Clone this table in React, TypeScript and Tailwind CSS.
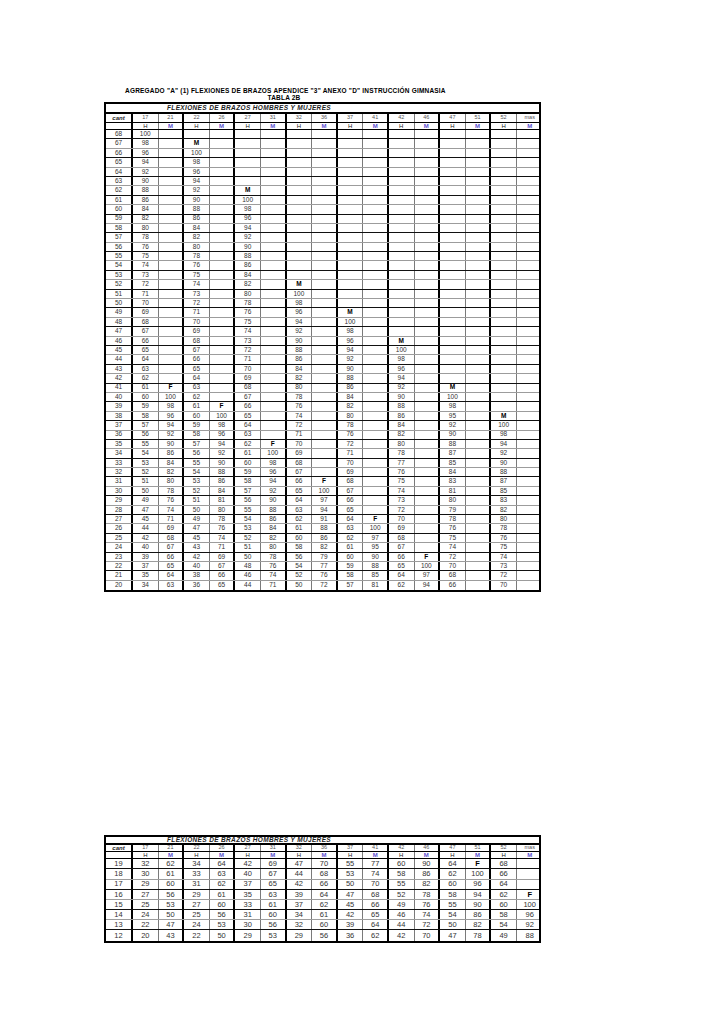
import React from "react";

type Col = { start: number; vals: string[] };

// column order: cant, 17H, 21M, 22H, 26M, 27H, 31M, 32H, 36M, 37H, 41M, 42H, 46M, 47H, 51M, 52H, mas M
const heads = ["cant", "17", "21", "22", "26", "27", "31", "32", "36", "37", "41", "42", "46", "47", "51", "52", "mas"];

const cols: Col[] = [
  { start: 68, vals: ["100", "98", "96", "94", "92", "90", "88", "86", "84", "82", "80", "78", "76", "75", "74", "73", "72", "71", "70", "69", "68", "67", "66", "65", "64", "63", "62", "61", "60", "59", "58", "57", "56", "55", "54", "53", "52", "51", "50", "49", "47", "45", "44", "42", "40", "39", "37", "35", "34"] },
  { start: 41, vals: ["F", "100", "98", "96", "94", "92", "90", "86", "84", "82", "80", "78", "76", "74", "71", "69", "68", "67", "66", "65", "64", "63"] },
  { start: 67, vals: ["M", "100", "98", "96", "94", "92", "90", "88", "86", "84", "82", "80", "78", "76", "75", "74", "73", "72", "71", "70", "69", "68", "67", "66", "65", "64", "63", "62", "61", "60", "59", "58", "57", "56", "55", "54", "53", "52", "51", "50", "49", "47", "45", "43", "42", "40", "38", "36"] },
  { start: 39, vals: ["F", "100", "98", "96", "94", "92", "90", "88", "86", "84", "81", "80", "78", "76", "74", "71", "69", "67", "66", "65"] },
  { start: 62, vals: ["M", "100", "98", "96", "94", "92", "90", "88", "86", "84", "82", "80", "78", "76", "75", "74", "73", "72", "71", "70", "69", "68", "67", "66", "65", "64", "63", "62", "61", "60", "59", "58", "57", "56", "55", "54", "53", "52", "51", "50", "48", "46", "44"] },
  { start: 35, vals: ["F", "100", "98", "96", "94", "92", "90", "88", "86", "84", "82", "80", "78", "76", "74", "71"] },
  { start: 52, vals: ["M", "100", "98", "96", "94", "92", "90", "88", "86", "84", "82", "80", "78", "76", "74", "72", "71", "70", "69", "68", "67", "66", "65", "64", "63", "62", "61", "60", "58", "56", "54", "52", "50"] },
  { start: 31, vals: ["F", "100", "97", "94", "91", "88", "86", "82", "79", "77", "76", "72"] },
  { start: 49, vals: ["M", "100", "98", "96", "94", "92", "90", "88", "86", "84", "82", "80", "78", "76", "72", "71", "70", "69", "68", "67", "66", "65", "64", "63", "62", "61", "60", "59", "58", "57"] },
  { start: 27, vals: ["F", "100", "97", "95", "90", "88", "85", "81"] },
  { start: 46, vals: ["M", "100", "98", "96", "94", "92", "90", "88", "86", "84", "82", "80", "78", "77", "76", "75", "74", "73", "72", "70", "69", "68", "67", "66", "65", "64", "62"] },
  { start: 23, vals: ["F", "100", "97", "94"] },
  { start: 41, vals: ["M", "100", "98", "95", "92", "90", "88", "87", "85", "84", "83", "81", "80", "79", "78", "76", "75", "74", "72", "70", "68", "66"] },
  { start: 0, vals: [] },
  { start: 38, vals: ["M", "100", "98", "94", "92", "90", "88", "87", "85", "83", "82", "80", "78", "76", "75", "74", "73", "72", "70"] },
  { start: 0, vals: [] },
];

const bottomRows: string[][] = [
  ["19", "32", "62", "34", "64", "42", "69", "47", "70", "55", "77", "60", "90", "64", "F", "68", ""],
  ["18", "30", "61", "33", "63", "40", "67", "44", "68", "53", "74", "58", "86", "62", "100", "66", ""],
  ["17", "29", "60", "31", "62", "37", "65", "42", "66", "50", "70", "55", "82", "60", "96", "64", ""],
  ["16", "27", "56", "29", "61", "35", "63", "39", "64", "47", "68", "52", "78", "58", "94", "62", "F"],
  ["15", "25", "53", "27", "60", "33", "61", "37", "62", "45", "66", "49", "76", "55", "90", "60", "100"],
  ["14", "24", "50", "25", "56", "31", "60", "34", "61", "42", "65", "46", "74", "54", "86", "58", "96"],
  ["13", "22", "47", "24", "53", "30", "56", "32", "60", "39", "64", "44", "72", "50", "82", "54", "92"],
  ["12", "20", "43", "22", "50", "29", "53", "29", "56", "36", "62", "42", "70", "47", "78", "49", "88"],
];

const topRows: string[][] = [];
for (let r = 68; r >= 20; r--) {
  const row = [String(r)];
  cols.forEach((c) => {
    const k = c.start - r;
    row.push(c.start && k >= 0 && k < c.vals.length ? c.vals[k] : "");
  });
  topRows.push(row);
}

const width = (i: number) => (i === 0 ? "w-[27px]" : "w-[25.6px]");
const vline = (i: number) =>
  i === 16 ? "" : i % 2 === 0 ? "border-r-2 border-black" : "border-r border-[#7a7a7a]";

function Cell({ i, v, big }: { i: number; v: string; big?: boolean }) {
  const mark = v === "F" || v === "M";
  return (
    <div className={`${width(i)} ${vline(i)} h-full shrink-0 flex items-center justify-center`}>
      <span
        className={`${big ? "text-[7.5px]" : "text-[6.5px]"} leading-none ${
          mark ? "font-bold text-black" : "text-[#333]"
        }`}
      >
        {v}
      </span>
    </div>
  );
}

function Table({ rows, big }: { rows: string[][]; big?: boolean }) {
  return (
    <div className="w-[437px] border-2 border-black bg-white">
      <div className={`${big ? "h-[8px]" : "h-[10px]"} flex items-center border-b-2 border-black`}>
        <span className="pl-[61px] text-[6.5px] leading-[6px] font-bold italic tracking-[0.35px] text-[#222]">
          FLEXIONES DE BRAZOS HOMBRES Y MUJERES
        </span>
      </div>
      <div className={`${big ? "h-[7px]" : "h-[9px]"} flex border-b border-black`}>
        {heads.map((h, i) => (
          <div key={h} className={`${width(i)} ${vline(i)} h-full shrink-0 flex items-center justify-center`}>
            {i === 0 ? (
              <span className="text-[6px] leading-none font-bold italic text-[#222]">cant</span>
            ) : (
              <span className="text-[5.5px] leading-none text-[#555]">{h}</span>
            )}
          </div>
        ))}
      </div>
      <div className="h-[7px] flex border-b border-black">
        {heads.map((h, i) => (
          <div key={h} className={`${width(i)} ${vline(i)} h-full shrink-0 flex items-center justify-center`}>
            {i === 0 ? null : i % 2 === 1 ? (
              <span className="text-[6px] leading-none text-[#222]">H</span>
            ) : (
              <span className="text-[6px] leading-none font-bold text-[#5a4fd0]">M</span>
            )}
          </div>
        ))}
      </div>
      {rows.map((row, k) => (
        <div
          key={row[0]}
          className={`${big ? "h-[10.2px]" : "h-[9.4px]"} flex ${
            k === rows.length - 1 ? "" : k % 2 === 0 ? "border-b border-[#111]" : "border-b border-[#9c9c9c]"
          }`}
        >
          {row.map((v, i) => (
            <Cell key={i} i={i} v={v} big={big} />
          ))}
        </div>
      ))}
    </div>
  );
}

export default function App() {
  return (
    <div className="w-[728px] h-[1030px] bg-white pt-[88px] font-['Liberation_Sans',Arial,sans-serif]">
      <div className="ml-[125px] w-[330px] h-[6px] whitespace-nowrap text-[6.5px] leading-[6px] font-bold tracking-[0.2px] text-black">
        AGREGADO "A" (1) FLEXIONES DE BRAZOS APENDICE "3" ANEXO "D" INSTRUCCIÓN GIMNASIA
      </div>
      <div className="ml-[125px] w-[318px] h-[7px] pt-px text-center text-[6.5px] leading-[6px] font-bold tracking-[0.2px] text-black">
        TABLA 2B
      </div>
      <div className="ml-[104px] mt-px">
        <Table rows={topRows} />
      </div>
      <div className="ml-[104px] mt-[243px]">
        <Table rows={bottomRows} big />
      </div>
    </div>
  );
}
